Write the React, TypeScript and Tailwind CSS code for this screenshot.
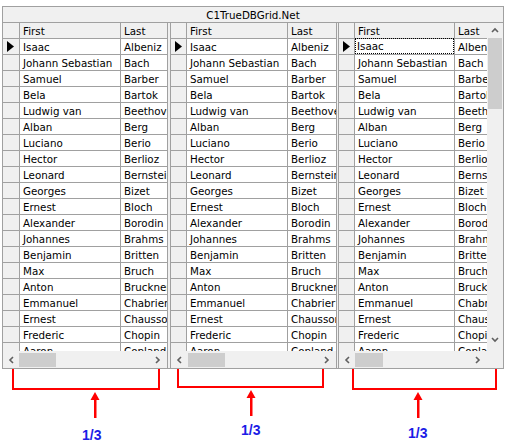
import React from "react";

const rows: [string, string][] = [
  ["Isaac", "Albeniz"],
  ["Johann Sebastian", "Bach"],
  ["Samuel", "Barber"],
  ["Bela", "Bartok"],
  ["Ludwig van", "Beethoven"],
  ["Alban", "Berg"],
  ["Luciano", "Berio"],
  ["Hector", "Berlioz"],
  ["Leonard", "Bernstein"],
  ["Georges", "Bizet"],
  ["Ernest", "Bloch"],
  ["Alexander", "Borodin"],
  ["Johannes", "Brahms"],
  ["Benjamin", "Britten"],
  ["Max", "Bruch"],
  ["Anton", "Bruckner"],
  ["Emmanuel", "Chabrier"],
  ["Ernest", "Chausson"],
  ["Frederic", "Chopin"],
  ["Aaron", "Copland"],
];

const Chevron = ({ dir }: { dir: "left" | "right" | "up" | "down" }) => {
  const paths = {
    left: "M5 1 L2 4 L5 7",
    right: "M2 1 L5 4 L2 7",
    up: "M1 5 L4 2 L7 5",
    down: "M1 2 L4 5 L7 2",
  };
  return (
    <svg width="8" height="8" viewBox="0 0 8 8">
      <path d={paths[dir]} fill="none" stroke="#606060" strokeWidth="1.6" />
    </svg>
  );
};

type SplitProps = {
  width: string;
  selW: string;
  firstW: string;
  lastW: string;
  thumbLeft: string;
  thumbW: string;
  vscroll?: boolean;
  focus?: boolean;
};

// one split of the grid: record selectors, two columns, scrollbar
const Split = ({ width, selW, firstW, lastW, thumbLeft, thumbW, vscroll, focus }: SplitProps) => {
  return (
    <div className={`${width} flex flex-col shrink-0`}>
      <div className="flex h-[328px] overflow-hidden">
        <div className={`${selW} shrink-0 bg-[#f0f0f0] flex flex-col`}>
          <div className="h-[16px] shrink-0 border-b border-r border-[#a0a0a0]" />
          {rows.map((r, i) => (
            <div key={i} className="h-[16px] shrink-0 border-b border-r border-[#a0a0a0] flex items-center pl-[4px]">
              {i === 0 && (
                <svg width="7" height="11" viewBox="0 0 7 11">
                  <path d="M0 0 L7 5.5 L0 11 Z" fill="#000" />
                </svg>
              )}
            </div>
          ))}
        </div>
        <div className={`${firstW} shrink-0 flex flex-col`}>
          <div className="h-[16px] shrink-0 bg-[#f0f0f0] border-b border-r border-[#a0a0a0] pl-[3px] leading-[16px]">First</div>
          {rows.map((r, i) => (
            <div key={i} className="h-[16px] shrink-0 bg-white border-b border-r border-[#a0a0a0] pl-[3px] leading-[16px] whitespace-nowrap">
              {focus && i === 0 ? (
                <span className="block h-[14px] -ml-[2px] pl-[1px] mr-[1px] outline outline-1 outline-dotted outline-black leading-[15px]">{r[0]}</span>
              ) : (
                r[0]
              )}
            </div>
          ))}
        </div>
        <div className={`${lastW} flex flex-col overflow-hidden`}>
          <div className="h-[16px] shrink-0 bg-[#f0f0f0] border-b border-[#a0a0a0] pl-[3px] leading-[16px] whitespace-nowrap">Last</div>
          {rows.map((r, i) => (
            <div key={i} className="h-[16px] shrink-0 bg-white border-b border-[#a0a0a0] pl-[3px] leading-[16px] whitespace-nowrap overflow-hidden">
              {r[1]}
            </div>
          ))}
        </div>
        {vscroll && (
          <div className="w-[16px] shrink-0 bg-[#f0f0f0] flex flex-col items-center">
            <div className="h-[15px] flex items-center justify-center">
              <Chevron dir="up" />
            </div>
            <div className="w-[14px] h-[71px] bg-[#cdcdcd]" />
            <div className="flex-1" />
            <div className="h-[15px] mb-[4px] flex items-center justify-center">
              <Chevron dir="down" />
            </div>
          </div>
        )}
      </div>
      <div className="h-[17px] flex">
        <div className="flex-1 bg-[#f0f0f0] flex items-center px-[5px]">
          <Chevron dir="left" />
          <div className={`${thumbLeft} ${thumbW} h-[14px] bg-[#cdcdcd]`} />
          <div className="flex-1" />
          <Chevron dir="right" />
        </div>
        {vscroll && <div className="w-[16px] bg-[#f0f0f0]" />}
      </div>
    </div>
  );
};

type MarkerProps = { bw: string; bh: string; arrowMl: string; arrowMt: string; textMl: string; textMt: string };

const Marker = ({ bw, bh, arrowMl, arrowMt, textMl, textMt }: MarkerProps) => (
  <div className={`${bw} flex flex-col`}>
    <div className={`${bh} border-2 border-t-0 border-[#ff0000]`} />
    <svg className={`${arrowMl} ${arrowMt}`} width="10" height="26" viewBox="0 0 10 26">
      <path d="M5 0 L9.5 8 L0.5 8 Z" fill="#ff0000" />
      <rect x="4" y="6" width="2.5" height="20" fill="#ff0000" />
    </svg>
    <span
      className={`${textMl} ${textMt} w-fit text-[14px] font-bold text-[#1c1ce6] leading-[16px]`}
      style={{ fontFamily: '"Liberation Sans", Arial, sans-serif' }}
    >
      1/3
    </span>
  </div>
);

export default function App() {
  return (
    <div className="w-[506px] h-[447px] bg-white overflow-hidden">
      <div
        className="ml-[2px] mt-[6px] w-[502px] border border-[#a0a0a0] text-[10.3px] text-black"
        style={{ fontFamily: '"DejaVu Sans", Tahoma, sans-serif' }}
      >
        <div className="h-[16px] bg-[#f0f0f0] border-b border-[#a0a0a0] text-center leading-[16px]">C1TrueDBGrid.Net</div>
        <div className="flex">
          <Split width="w-[164px]" selW="w-[17px]" firstW="w-[101px]" lastW="flex-1" thumbLeft="ml-[3px]" thumbW="w-[37px]" />
          <div className="w-[4px] shrink-0 bg-[#f0f0f0] border-l border-r border-[#a0a0a0]" />
          <Split width="w-[165px]" selW="w-[16px]" firstW="w-[101px]" lastW="flex-1" thumbLeft="ml-[4px]" thumbW="w-[37px]" />
          <div className="w-[3px] shrink-0 bg-[#f0f0f0] border-l border-r border-[#a0a0a0]" />
          <Split width="w-[164px]" selW="w-[16px]" firstW="w-[100px]" lastW="w-[32px]" thumbLeft="ml-[3px]" thumbW="w-[28px]" vscroll focus />
        </div>
      </div>
      <div className="flex">
        <div className="ml-[12px]">
          <Marker bw="w-[148px]" bh="h-[21px]" arrowMl="ml-[78px]" arrowMt="mt-[2px]" textMl="ml-[70px]" textMt="mt-[9px]" />
        </div>
        <div className="ml-[17px]">
          <Marker bw="w-[147px]" bh="h-[19px]" arrowMl="ml-[69px]" arrowMt="mt-[2px]" textMl="ml-[64px]" textMt="mt-[6px]" />
        </div>
        <div className="ml-[28px]">
          <Marker bw="w-[145px]" bh="h-[21px]" arrowMl="ml-[61px]" arrowMt="mt-[2px]" textMl="ml-[56px]" textMt="mt-[7px]" />
        </div>
      </div>
    </div>
  );
}
